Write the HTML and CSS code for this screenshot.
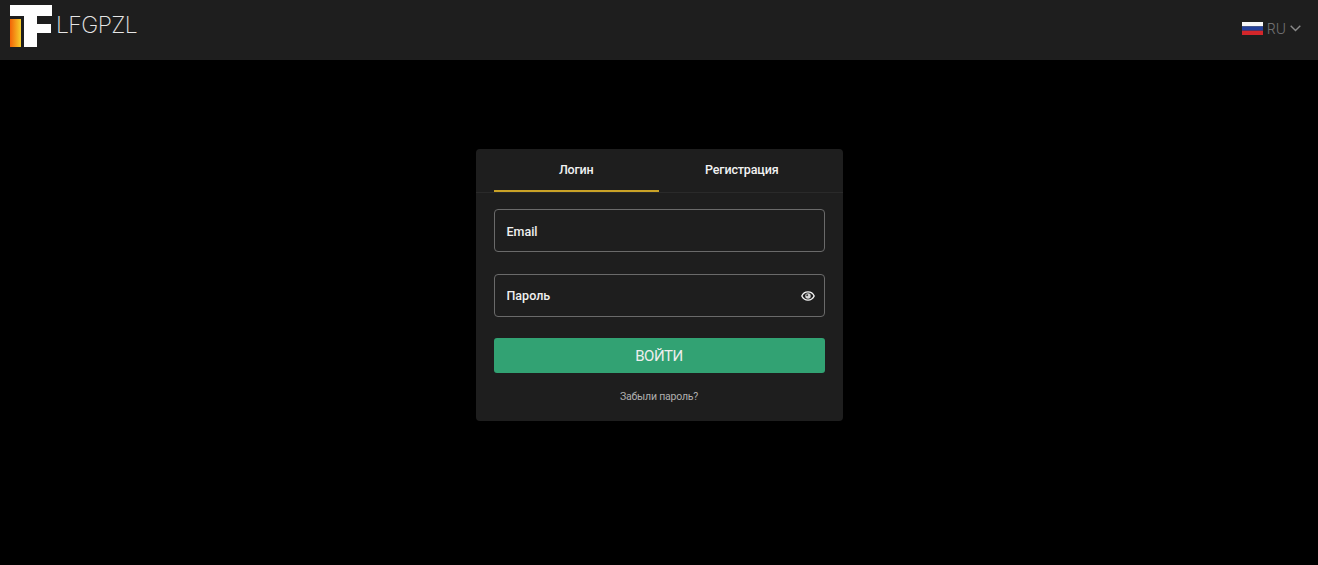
FILE: index.html
```html
<!DOCTYPE html>
<html lang="ru">
<head>
    <meta charset="UTF-8">
    <meta name="viewport" content="width=device-width, initial-scale=1.0">
    <title>LFGPZL</title>
    <link rel="stylesheet" href="styles.css">
</head>
<body>
    <header class="topbar">
        <a class="logo" href="#">
            <svg class="logo-mark" width="42" height="42" viewBox="0 0 42 42">
                <defs>
                    <linearGradient id="logoGrad" x1="0" y1="0" x2="1" y2="0">
                        <stop offset="0" stop-color="#f26406"/>
                        <stop offset="1" stop-color="#f7cf2c"/>
                    </linearGradient>
                </defs>
                <rect x="0" y="14" width="11" height="28" fill="url(#logoGrad)"/>
                <path d="M0 0H42V11H27V19H41V28H27V42H14V11H0Z" fill="#fff"/>
            </svg>
            <span class="logo-text">LFGPZL</span>
        </a>
        <button class="lang">
            <svg class="flag" width="21" height="13" viewBox="0 0 21 13">
                <rect width="21" height="4.400" fill="#f6f6f6"/>
                <rect y="4.400" width="21" height="4.300" fill="#23409a"/>
                <rect y="8.700" width="21" height="4.300" fill="#d3262a"/>
            </svg>
            <span>RU</span>
            <svg class="chevron" width="11" height="7" viewBox="0 0 11 7">
                <path d="M0.700 0.800L5.500 5.600L10.300 0.800" fill="none" stroke="#8a8a8a" stroke-width="1.400"/>
            </svg>
        </button>
    </header>

    <main class="page">
        <div class="card">
            <div class="tabs">
                <div class="tab active">Логин</div>
                <div class="tab">Регистрация</div>
            </div>
            <form class="form">
                <div class="field">Email</div>
                <div class="field">
                    <span>Пароль</span>
                    <svg class="eye" width="14" height="10" viewBox="0 0 15 11">
                        <path d="M7.500 1C4.500 1 2 2.700 0.700 5.500C2 8.300 4.500 10 7.500 10S13 8.300 14.300 5.500C13 2.700 10.500 1 7.500 1Z" fill="none" stroke="#f2f2f2" stroke-width="1.500"/>
                        <circle cx="7.500" cy="5.500" r="3" fill="#d4d4d4"/>
                        <circle cx="6.600" cy="4.600" r="1.100" fill="#3a3a3a"/>
                    </svg>
                </div>
                <button class="submit" type="button">ВОЙТИ</button>
                <a class="forgot" href="#">Забыли пароль?</a>
            </form>
        </div>
    </main>
</body>
</html>
```
FILE: styles.css
```css
* {
    box-sizing: border-box;
}
body {
    margin: 0;
    min-height: 565px;
    background: #000;
    color: #fff;
    font-family: Roboto, "Liberation Sans", sans-serif;
}
.topbar {
    height: 60px;
    background: #1e1e1e;
    display: flex;
    justify-content: space-between;
    padding: 5px 17px 0 10px;
}
.logo {
    display: flex;
    align-items: flex-start;
    gap: 5px;
    color: #e6e6e6;
    text-decoration: none;
}
.logo-text {
    font-family: Inter, sans-serif;
    font-size: 23px;
    font-weight: 200;
    letter-spacing: -0.6px;
    line-height: 40px;
    margin-left: -1px;
}
.lang {
    height: 46px;
    display: flex;
    align-items: center;
    gap: 4px;
    background: none;
    border: none;
    padding: 0;
    color: #6f6f6f;
    font-family: Inter, sans-serif;
    font-size: 14px;
    font-weight: 300;
}
.page {
    display: flex;
    justify-content: center;
    padding-top: 89px;
}
.card {
    width: 367px;
    height: 272px;
    background: #1e1e1e;
    border-radius: 4px;
}
.tabs {
    display: flex;
    height: 44px;
    padding: 0 18px;
    border-bottom: 1px solid #2a2a2a;
}
.tab {
    flex: 1;
    height: 43px;
    text-align: center;
    font-size: 12.500px;
    font-weight: 500;
    letter-spacing: -0.15px;
    line-height: 41px;
    color: #f2f2f2;
}
.tab.active {
    border-bottom: 2px solid #c9a227;
}
.form {
    padding: 16px 18px 0;
    display: flex;
    flex-direction: column;
}
.field {
    height: 43px;
    margin-bottom: 22px;
    padding: 1px 9px 0 12px;
    border: 1px solid #6a6a6a;
    border-radius: 4px;
    display: flex;
    align-items: center;
    justify-content: space-between;
    font-size: 12.500px;
    font-weight: 500;
    color: #f0f0f0;
}
.field + .field {
    margin-bottom: 21px;
    padding-top: 0;
}
.submit {
    height: 35px;
    padding: 1px 0 0;
    background: #32a273;
    border: none;
    border-radius: 3px;
    color: #eee;
    font-family: inherit;
    font-size: 15px;
    letter-spacing: -0.5px;
}
.forgot {
    margin-top: 17px;
    text-align: center;
    font-size: 10.500px;
    letter-spacing: -0.2px;
    color: #b0b0b0;
    text-decoration: none;
}
```
